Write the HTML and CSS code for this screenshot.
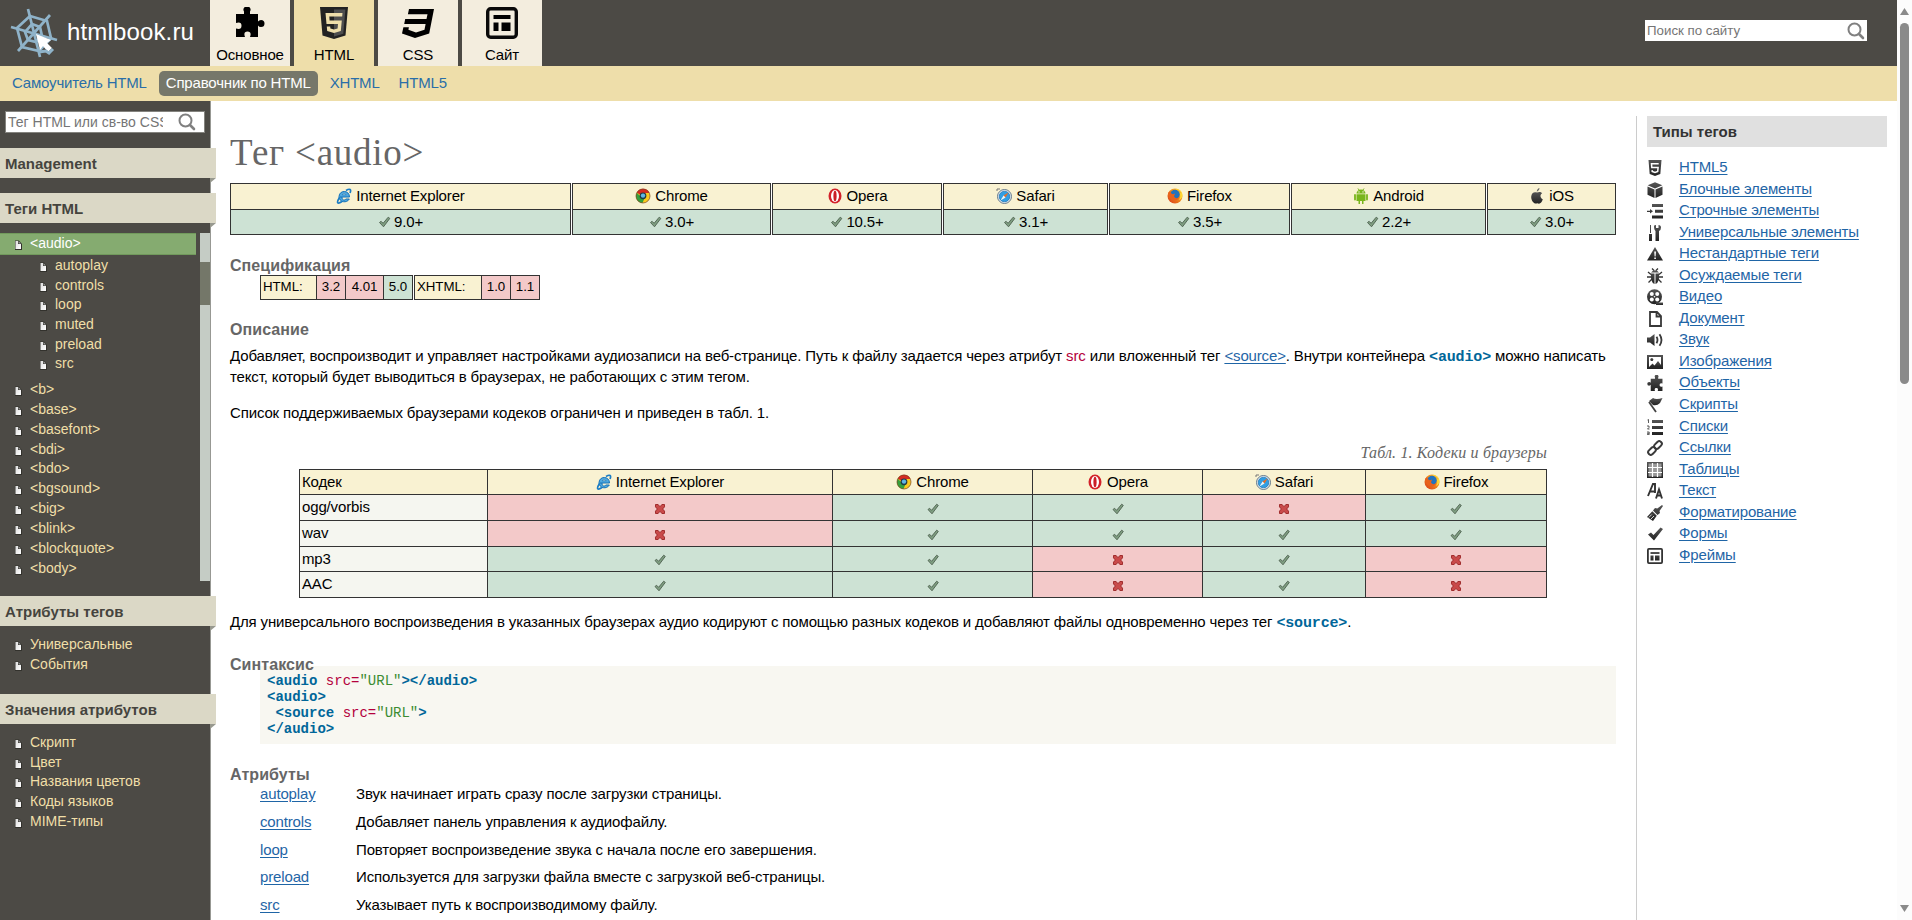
FILE: index.html
```html
<!DOCTYPE html>
<html lang="ru">
<head>
<meta charset="utf-8">
<title>Тег &lt;audio&gt; | htmlbook.ru</title>
<link rel="stylesheet" href="styles.css">
</head>
<body>
<svg class="defs" width="0" height="0" aria-hidden="true">
  <defs>
    <linearGradient id="dark" x1="0" y1="0" x2="0" y2="1"><stop offset="0" stop-color="#555"/><stop offset="1" stop-color="#222"/></linearGradient>
    <linearGradient id="ff" x1="0" y1="1" x2="1" y2="0"><stop offset="0" stop-color="#d8341a"/><stop offset=".55" stop-color="#f08a1c"/><stop offset="1" stop-color="#ffd83a"/></linearGradient>
    <linearGradient id="doc" x1="0" y1="0" x2="1" y2="1"><stop offset="0" stop-color="#ddd"/><stop offset="1" stop-color="#fff"/></linearGradient>
  </defs>
  <symbol id="i-search" viewBox="0 0 18 18"><circle cx="7.5" cy="7.5" r="6" fill="none" stroke="#808080" stroke-width="2"/><path d="M12 12l4 4" stroke="#808080" stroke-width="2.6" stroke-linecap="round"/></symbol>
  <symbol id="i-doc" viewBox="0 0 7 10"><path d="M0 .5h4L7 4v6H0z" fill="#33322d"/><path d="M.5 1H3v3h3v5H.5z" fill="url(#doc)"/><path d="M3.500 1L6 3.500H3.500z" fill="#999"/></symbol>
  <symbol id="i-ie" viewBox="0 0 16 16"><path d="M4 9h9.500c0-7-10-7.500-10.500-.5 0 6 8 7 10.300 2.500H9.800C8.500 13 5.800 12.200 6 9" fill="#4fa9df" stroke="#1672b8" stroke-width="1"/><path d="M6 6.800q2-2.800 4.300 0z" fill="#f9f2d2" stroke="#1672b8" stroke-width=".6"/><path d="M14 5c1.500-3.500 0-5-4-2.500M3.500 9.500C0 15 1.500 16.500 6 13.500" fill="none" stroke="#1a7cc4" stroke-width="1.700"/></symbol>
  <symbol id="i-chrome" viewBox="0 0 16 16"><circle cx="8" cy="8" r="7" fill="#fbc91e"/><path d="M8 8L1.700 4.800A7.100 7.100 0 0 1 14.500 5H8z" fill="#d62a20"/><path d="M1.800 4.700A7 7 0 0 0 7.500 15L10 9 6 9z" fill="#35a03c"/><circle cx="8" cy="8" r="7" fill="none" stroke="#7a4525" stroke-width=".7"/><circle cx="8" cy="7.800" r="3.400" fill="#203a45"/><circle cx="8" cy="7.600" r="2.200" fill="#5fb6e6"/></symbol>
  <symbol id="i-opera" viewBox="0 0 16 16"><ellipse cx="8" cy="8" rx="6.500" ry="7.500" fill="#d3222a"/><ellipse cx="8" cy="8" rx="4" ry="5.900" fill="#fff"/><ellipse cx="8" cy="8" rx="1.600" ry="5.300" fill="#cb1e26"/></symbol>
  <symbol id="i-safari" viewBox="0 0 16 16"><circle cx="8.500" cy="8.500" r="7" fill="#e8eef2" stroke="#64788a" stroke-width="1"/><circle cx="8.500" cy="8.500" r="5.300" fill="#319ee3" stroke="#176bb0" stroke-width=".7"/><path d="M12.500 4.500l-3 5-2-2z" fill="#e96b24"/><path d="M4.500 12.500l5-3-2-2z" fill="#f2f5f7"/><path d="M1 3V1h3" fill="none" stroke="#777" stroke-width="1"/></symbol>
  <symbol id="i-firefox" viewBox="0 0 16 16"><circle cx="8" cy="8" r="7.500" fill="url(#ff)"/><circle cx="8" cy="6.500" r="4.700" fill="#2373bd"/><path d="M1 5q2-3 3 0 1 2 4 .5l-1 3q2 3 5.500.5-2 4.500-7 3Q2 11 1 5z" fill="#e8621c"/><path d="M9 1.500q4 0 5.500 4L13 5q1 4-1 7 4-2 3.400-6Q14 1 9 .7z" fill="#ffda33"/></symbol>
  <symbol id="i-android" viewBox="0 0 16 16"><path d="M3.500 5.500a4.500 4 0 0 1 9 0z" fill="#79b51c"/><path d="M5 .5l1.400 2M11 .5L9.600 2.500" stroke="#79b51c" stroke-width="1"/><path d="M3.500 6.300h9V13h-2v3H9v-3H7v3H5.500v-3h-2z" fill="#79b51c"/><path d="M2 7v4.500M14 7v4.500" stroke="#79b51c" stroke-width="1.800" stroke-linecap="round"/><circle cx="6" cy="3.900" r=".7" fill="#fff"/><circle cx="10" cy="3.900" r=".7" fill="#fff"/></symbol>
  <symbol id="i-apple" viewBox="0 0 16 16"><path d="M10.500 0q.2 2.500-2.700 3.700Q7.700 1 10.500 0z" fill="#666"/><path d="M8 4.600c2-1.200 4-.8 5.200.6-2.500 1.500-2.200 5 .6 6.100C12.500 15 11 16.500 8.300 15.300 5 16.800 2 12.500 2.200 8.700 2.500 4.500 5.500 3.500 8 4.600z" fill="url(#dark)"/></symbol>
  <symbol id="i-ok" viewBox="0 0 12 12"><path d="M1 6.500l1.600-1.200 2 2L9.700 1.200l1.600 1.200L5 10.800z" fill="#7f9f82" stroke="#4e604f" stroke-width=".9"/></symbol>
  <symbol id="i-no" viewBox="0 0 12 12"><path d="M1.500 1.500h2.600L6 3.700l1.900-2.200h2.600v2.400L8.600 6l1.900 2.100v2.400H7.900L6 8.300l-1.900 2.200H1.500V8.100L3.400 6 1.500 3.900z" fill="#c94a4a" stroke="#982222" stroke-width=".9"/></symbol>
  <symbol id="i-puzzle" viewBox="0 0 30 30"><path d="M1 7h8V4.500a3.500 3.500 0 1 1 6-.0V7h8v7.500q1-1.500 3-1.500a3.500 3.500 0 0 1 0 7q-2 0-3-1.500V30h-8q2-5.500-2.500-5.500T10 30H1v-8.500q5.500 1.500 5.500-2.800T1 16z"/></symbol>
  <symbol id="i-html5" viewBox="0 0 28 32"><path d="M0 0h28l-2.500 28.500L14 32 2.500 28.500z" fill="#222"/><path d="M14 2.500h11.400L23.300 26.800 14 29.500z" fill="#fff" opacity=".2"/><path class="cut" d="M5.500 6h17l-.3 3.500H9.300l.3 4h12.200l-1 10.500-6.800 2-6.800-2-.4-4.500h3.400l.2 2 3.600 1 3.600-1 .4-4.500H6.500z"/></symbol>
  <symbol id="i-css3" viewBox="0 0 32 29"><path d="M7 0h25l-4.800 24.500L13 29 0 24.500l1.400-6.300h5.500l-.5 2.600L14 23.500l8.500-2.800 1.100-5.700H2.200l1-5H24.500l1-4.800H5.900z"/></symbol>
  <symbol id="i-site" viewBox="0 0 32 32"><rect x="1.700" y="1.700" width="28.600" height="28.600" rx="3" fill="none" stroke="#0a0a0a" stroke-width="3.400"/><path d="M7.500 8h17v4h-17zM7.500 15.500h5V24h-5zM15.500 15.500h9V24h-9z"/></symbol>

  <symbol id="r-html5" viewBox="0 0 16 16"><path d="M1.500 0h13l-1.200 14L8 16l-5.300-2z"/><path d="M11.700 3.800H4.500l.3 3.700h6.300l-.4 4L8 12.400l-2.800-.9-.1-1.400" fill="none" stroke="#fff" stroke-width="1.500"/></symbol>
  <symbol id="r-box" viewBox="0 0 16 16"><path d="M8 .3l7.300 3L8 6.500.7 3.300zM.5 4.500l7 3V16l-7-3.300zM15.500 4.500l-7 3V16l7-3.300z"/></symbol>
  <symbol id="r-inline" viewBox="0 0 16 16"><path d="M5 1h11v3H5zM8 6.700h8v3H8zM5 12.500h11v3H5zM0 7.700h3V6l3 2.300-3 2.300V9H0z"/></symbol>
  <symbol id="r-tools" viewBox="0 0 16 16"><path d="M3 0h1v8H3zM2 9h3v7H2zM7 1q0-1 2-1v3h2.500V0q2.500 0 2.500 2.500T12 6v10H8.500V6Q7 5 7 1z"/></symbol>
  <symbol id="r-warn" viewBox="0 0 16 16"><path d="M8 1l8 13.500H0z"/><path d="M7.200 5.500h1.800l-.4 5H7.600zM7.300 11.500h1.600v1.500H7.300z" fill="#fff"/></symbol>
  <symbol id="r-bug" viewBox="0 0 16 16"><path d="M4 4.500q4-4.500 8 0zM4 5.500h3.500V16Q3 14 4 5.500zM8.500 5.500H12q1 8.500-3.500 10.500z"/><path d="M5 .5l2 2M11 .5l-2 2M1 4l3 2.500M15 4l-3 2.500M0 9h4M16 9h-4M1.500 14.500L5 11M14.500 14.500L11 11" stroke="#333" stroke-width="1.300"/></symbol>
  <symbol id="r-reel" viewBox="0 0 16 16"><circle cx="7.500" cy="7.800" r="7.500"/><path d="M9 13.500h7V16H9z"/><g fill="#fff"><circle cx="4.800" cy="5" r="2"/><circle cx="10.200" cy="5" r="2"/><circle cx="4.800" cy="10.600" r="2"/><circle cx="10.200" cy="10.600" r="2"/><circle cx="7.500" cy="7.800" r=".8"/></g></symbol>
  <symbol id="r-page" viewBox="0 0 16 16"><path d="M3 1h7l4 4v10H3zM9.500 1v4.500H14" fill="none" stroke="#383838" stroke-width="1.800"/></symbol>
  <symbol id="r-sound" viewBox="0 0 16 16"><path d="M0 5.500h3L7.500 2v12L3 10.500H0z"/><path d="M9.500 4.800q2 3.200 0 6.400M12.500 2.200q4 5.800 0 11.600" fill="none" stroke="#3a3a3a" stroke-width="1.800"/></symbol>
  <symbol id="r-image" viewBox="0 0 16 16"><path d="M0 1h16v14H0z"/><path d="M2 3h12v10H2z" fill="#fff"/><path d="M2 13l3.500-3.500 2 2L11 7l3 4v2z"/><circle cx="4.800" cy="5.500" r="1.500"/></symbol>
  <symbol id="r-flag" viewBox="0 0 16 16"><path d="M2 4l4-3q3 2 9.500 0L13 6q-3 3-7 2z"/><path d="M2 5l7 10" stroke="#444" stroke-width="1.800"/></symbol>
  <symbol id="r-list" viewBox="0 0 16 16"><path d="M5 1h11v3H5zM5 7h11v3H5zM5 13h11v3H5z"/><path d="M.5 1l1-.5V4M0 7h2v1.500L.5 10h2M0 13h2.200v2.600H0M0 14.300h2" stroke="#333" fill="none" stroke-width=".8"/></symbol>
  <symbol id="r-link" viewBox="0 0 16 16"><g fill="none" stroke="#3a3a3a" stroke-width="2"><rect x="-4.300" y="-2.600" width="8.600" height="5.200" rx="2.600" transform="translate(11 5) rotate(-45)"/><rect x="-4.300" y="-2.600" width="8.600" height="5.200" rx="2.600" transform="translate(5 11) rotate(-45)"/></g></symbol>
  <symbol id="r-table" viewBox="0 0 16 16"><path d="M0 0h16v16H0z"/><path d="M1.500 1.500h13v13h-13z" fill="#999"/><path d="M5.500 1v14M10.500 1v14M1 5.500h14M1 10.500h14" stroke="#fff" stroke-width="1.200"/></symbol>
  <symbol id="r-text" viewBox="0 0 16 16"><path d="M1 13L6 1h2v9M3 8.500h5M9 15.500l3-9 3 9M10 12.500h4" fill="none" stroke="#333" stroke-width="1.900"/></symbol>
  <symbol id="r-brush" viewBox="0 0 16 16"><path d="M15 0l1 1-3.500 5 .5 2-2.500 2L6 5.500 8 3l2.300.5zM5.300 6.300l4.500 4.500L6 16 0 12z"/><path d="M1.800 12.500l3-3M4 14l3-3" stroke="#fff" stroke-width=".8"/></symbol>
  <symbol id="r-check" viewBox="0 0 16 16"><path d="M1 8.500l3-2L6.500 9 13.500 1.500 16 3 7 14.500z"/></symbol>
  <symbol id="r-frame" viewBox="0 0 16 16"><rect x=".9" y=".9" width="14.200" height="14.200" rx="1" fill="none" stroke="#333" stroke-width="1.800"/><path d="M3.500 4h9v2h-9zM3.500 7.500h3v5h-3zM8 7.500h4.500v5H8z"/></symbol>
</svg>

<div class="viewport">
  <div class="page">
    <header class="header">
      <a class="logo">
        <svg width="48" height="52" viewBox="0 0 48 52">
          <g fill="none" stroke="#8fb3c9" stroke-width="2.700">
            <path d="M18 1l12 48M40 7L8 43M1 19l46 13"/>
            <path d="M20 8L37 13 41 30 29 43 12 39 7 20z"/>
            <path d="M22 16l8 3 2 9-6 6-8-2-3-8z"/>
          </g>
          <path d="M26 26l15 6-4 3 5 5-4 4-5-6-3 4z" fill="#fff"/>
          <path d="M29 44l7-1 3 2 4-4" fill="none" stroke="#8fb3c9" stroke-width="3"/>
        </svg>
        <span>htmlbook.ru</span>
      </a>
      <nav class="tabs">
        <a class="tab"><svg width="30" height="30"><use href="#i-puzzle"/></svg><span>Основное</span></a>
        <a class="tab current"><svg width="30" height="32"><use href="#i-html5"/></svg><span>HTML</span></a>
        <a class="tab css"><svg width="32" height="29"><use href="#i-css3"/></svg><span>CSS</span></a>
        <a class="tab"><svg width="32" height="32"><use href="#i-site"/></svg><span>Сайт</span></a>
      </nav>
      <div class="search site-search"><span>Поиск по сайту</span><svg width="18" height="18"><use href="#i-search"/></svg></div>
    </header>
    <nav class="subnav">
      <a>Самоучитель HTML</a><a class="current">Справочник по HTML</a><a>XHTML</a><a>HTML5</a>
    </nav>
    <div class="columns">
      <aside class="sidebar">
        <div class="search tag-search"><span>Тег HTML или св-во CSS</span><svg width="18" height="18"><use href="#i-search"/></svg></div>
        <h3>Management</h3>
        <h3 class="tags">Теги HTML</h3>
        <div class="scroller">
          <ul>
            <li class="active"><svg><use href="#i-doc"/></svg>&lt;audio&gt;</li>
            <li class="nest">
              <ul>
                <li><svg><use href="#i-doc"/></svg>autoplay</li>
                <li><svg><use href="#i-doc"/></svg>controls</li>
                <li><svg><use href="#i-doc"/></svg>loop</li>
                <li><svg><use href="#i-doc"/></svg>muted</li>
                <li><svg><use href="#i-doc"/></svg>preload</li>
                <li><svg><use href="#i-doc"/></svg>src</li>
              </ul>
            </li>
            <li><svg><use href="#i-doc"/></svg>&lt;b&gt;</li>
            <li><svg><use href="#i-doc"/></svg>&lt;base&gt;</li>
            <li><svg><use href="#i-doc"/></svg>&lt;basefont&gt;</li>
            <li><svg><use href="#i-doc"/></svg>&lt;bdi&gt;</li>
            <li><svg><use href="#i-doc"/></svg>&lt;bdo&gt;</li>
            <li><svg><use href="#i-doc"/></svg>&lt;bgsound&gt;</li>
            <li><svg><use href="#i-doc"/></svg>&lt;big&gt;</li>
            <li><svg><use href="#i-doc"/></svg>&lt;blink&gt;</li>
            <li><svg><use href="#i-doc"/></svg>&lt;blockquote&gt;</li>
            <li><svg><use href="#i-doc"/></svg>&lt;body&gt;</li>
          </ul>
          <div class="track"><div class="thumb"></div></div>
        </div>
        <h3 class="attrs">Атрибуты тегов</h3>
        <ul class="plain">
          <li><svg><use href="#i-doc"/></svg>Универсальные</li>
          <li><svg><use href="#i-doc"/></svg>События</li>
        </ul>
        <h3 class="values">Значения атрибутов</h3>
        <ul class="plain">
          <li><svg><use href="#i-doc"/></svg>Скрипт</li>
          <li><svg><use href="#i-doc"/></svg>Цвет</li>
          <li><svg><use href="#i-doc"/></svg>Названия цветов</li>
          <li><svg><use href="#i-doc"/></svg>Коды языков</li>
          <li><svg><use href="#i-doc"/></svg>MIME-типы</li>
        </ul>
      </aside>

      <main class="content">
        <h1>Тег &lt;audio&gt;</h1>
        <div class="browsers">
          <div><span><svg><use href="#i-ie"/></svg>Internet Explorer</span><b><svg><use href="#i-ok"/></svg>9.0+</b></div>
          <div><span><svg><use href="#i-chrome"/></svg>Chrome</span><b><svg><use href="#i-ok"/></svg>3.0+</b></div>
          <div><span><svg><use href="#i-opera"/></svg>Opera</span><b><svg><use href="#i-ok"/></svg>10.5+</b></div>
          <div><span><svg><use href="#i-safari"/></svg>Safari</span><b><svg><use href="#i-ok"/></svg>3.1+</b></div>
          <div><span><svg><use href="#i-firefox"/></svg>Firefox</span><b><svg><use href="#i-ok"/></svg>3.5+</b></div>
          <div><span><svg><use href="#i-android"/></svg>Android</span><b><svg><use href="#i-ok"/></svg>2.2+</b></div>
          <div><span><svg><use href="#i-apple"/></svg>iOS</span><b><svg><use href="#i-ok"/></svg>3.0+</b></div>
        </div>
        <h2>Спецификация</h2>
        <div class="spec">
          <div class="spec-html"><span>HTML:</span><i>3.2</i><i>4.01</i><i class="yes">5.0</i></div>
          <div class="spec-xhtml"><span>XHTML:</span><i>1.0</i><i>1.1</i></div>
        </div>
        <h2 class="h-desc">Описание</h2>
        <p>Добавляет, воспроизводит и управляет настройками аудиозаписи на веб-странице. Путь к файлу задается через атрибут <span class="attr">src</span> или вложенный тег <a>&lt;source&gt;</a>. Внутри контейнера <code>&lt;audio&gt;</code> можно написать текст, который будет выводиться в браузерах, не работающих с этим тегом.</p>
        <p class="second">Список поддерживаемых браузерами кодеков ограничен и приведен в табл. 1.</p>
        <div class="caption">Табл. 1. Кодеки и браузеры</div>
        <div class="codecs">
          <span class="left">Кодек</span><span><svg><use href="#i-ie"/></svg>Internet Explorer</span><span><svg><use href="#i-chrome"/></svg>Chrome</span><span><svg><use href="#i-opera"/></svg>Opera</span><span><svg><use href="#i-safari"/></svg>Safari</span><span><svg><use href="#i-firefox"/></svg>Firefox</span>
          <em>ogg/vorbis</em><i><svg><use href="#i-no"/></svg></i><b><svg><use href="#i-ok"/></svg></b><b><svg><use href="#i-ok"/></svg></b><i><svg><use href="#i-no"/></svg></i><b><svg><use href="#i-ok"/></svg></b>
          <em>wav</em><i><svg><use href="#i-no"/></svg></i><b><svg><use href="#i-ok"/></svg></b><b><svg><use href="#i-ok"/></svg></b><b><svg><use href="#i-ok"/></svg></b><b><svg><use href="#i-ok"/></svg></b>
          <em>mp3</em><b><svg><use href="#i-ok"/></svg></b><b><svg><use href="#i-ok"/></svg></b><i><svg><use href="#i-no"/></svg></i><b><svg><use href="#i-ok"/></svg></b><i><svg><use href="#i-no"/></svg></i>
          <em>AAC</em><b><svg><use href="#i-ok"/></svg></b><b><svg><use href="#i-ok"/></svg></b><i><svg><use href="#i-no"/></svg></i><b><svg><use href="#i-ok"/></svg></b><i><svg><use href="#i-no"/></svg></i>
        </div>
        <p class="third">Для универсального воспроизведения в указанных браузерах аудио кодируют с помощью разных кодеков и добавляют файлы одновременно через тег <code>&lt;source&gt;</code>.</p>
        <h2 class="h-syntax">Синтаксис</h2>
<pre><b>&lt;audio</b> <span class="attr">src=</span><span class="val">"URL"</span><b>&gt;&lt;/audio&gt;</b>
<b>&lt;audio&gt;</b>
 <b>&lt;source</b> <span class="attr">src=</span><span class="val">"URL"</span><b>&gt;</b>
<b>&lt;/audio&gt;</b></pre>
        <h2>Атрибуты</h2>
        <dl>
          <dt><a>autoplay</a></dt><dd>Звук начинает играть сразу после загрузки страницы.</dd>
          <dt><a>controls</a></dt><dd>Добавляет панель управления к аудиофайлу.</dd>
          <dt><a>loop</a></dt><dd>Повторяет воспроизведение звука с начала после его завершения.</dd>
          <dt><a>preload</a></dt><dd>Используется для загрузки файла вместе с загрузкой веб-страницы.</dd>
          <dt><a>src</a></dt><dd>Указывает путь к воспроизводимому файлу.</dd>
        </dl>
      </main>

      <aside class="types">
        <h4>Типы тегов</h4>
        <ul>
          <li><svg><use href="#r-html5"/></svg><a>HTML5</a></li>
          <li><svg><use href="#r-box"/></svg><a>Блочные элементы</a></li>
          <li><svg><use href="#r-inline"/></svg><a>Строчные элементы</a></li>
          <li><svg><use href="#r-tools"/></svg><a>Универсальные элементы</a></li>
          <li><svg><use href="#r-warn"/></svg><a>Нестандартные теги</a></li>
          <li><svg><use href="#r-bug"/></svg><a>Осуждаемые теги</a></li>
          <li><svg><use href="#r-reel"/></svg><a>Видео</a></li>
          <li><svg><use href="#r-page"/></svg><a>Документ</a></li>
          <li><svg><use href="#r-sound"/></svg><a>Звук</a></li>
          <li><svg><use href="#r-image"/></svg><a>Изображения</a></li>
          <li><svg class="flip"><use href="#i-puzzle"/></svg><a>Объекты</a></li>
          <li><svg><use href="#r-flag"/></svg><a>Скрипты</a></li>
          <li><svg><use href="#r-list"/></svg><a>Списки</a></li>
          <li><svg><use href="#r-link"/></svg><a>Ссылки</a></li>
          <li><svg><use href="#r-table"/></svg><a>Таблицы</a></li>
          <li><svg><use href="#r-text"/></svg><a>Текст</a></li>
          <li><svg><use href="#r-brush"/></svg><a>Форматирование</a></li>
          <li><svg><use href="#r-check"/></svg><a>Формы</a></li>
          <li><svg><use href="#r-frame"/></svg><a>Фреймы</a></li>
        </ul>
      </aside>
    </div>
  </div>
  <div class="scrollbar">
    <svg width="15" height="23" viewBox="0 0 15 23"><path d="M7.500 8l4.500 7H3z" fill="#8a8a8a"/></svg>
    <div class="bar"></div>
    <svg class="down" width="15" height="23" viewBox="0 0 15 23"><path d="M7.500 15L3 8h9z" fill="#8a8a8a"/></svg>
  </div>
</div>
</body>
</html>
```
FILE: styles.css
```css
* { box-sizing: border-box; }
body { margin: 0; font: 15px/21px "Liberation Sans", Arial, sans-serif; color: #000; background: #fff; overflow: hidden; }
ul, dl, dd, h1, h2, h3, h4, p, pre { margin: 0; padding: 0; }
ul { list-style: none; }
.defs { position: absolute; }
.cut { fill: #eedeaa; }
.viewport { display: flex; height: 920px; }
.page { flex: 1; display: flex; flex-direction: column; min-width: 0; }

.header { display: flex; height: 66px; background: #4c4a45; flex: none; }
.logo { display: flex; width: 210px; padding: 8px 0 0 10px; color: #fff; font-size: 24px; line-height: 48px; letter-spacing: .15px; }
.logo span { margin-left: 9px; }
.tabs { display: flex; gap: 4px; }
.tab { width: 80px; background: #f3edde; display: flex; flex-direction: column; align-items: center; padding-top: 7px; height: 66px; color: #000; letter-spacing: -.14px; }
.tab.current { background: #eedeaa; }
.tab.css { padding-top: 9px; }
.tab svg { flex: none; }
.tab span { margin-top: auto; line-height: 22px; }
.search { display: flex; align-items: center; background: #fff; color: #757575; font-size: 14px; }
.search span { white-space: nowrap; overflow: hidden; flex: 1; }
.site-search { width: 222px; height: 21px; margin: 20px 30px 0 auto; padding: 0 2px 0 2px; font-size: 13.300px; }

.subnav { display: flex; height: 35px; flex: none; background: #eedeaa; padding: 5px 0 0 5px; gap: 5px; letter-spacing: -.18px; }
.subnav a { height: 25px; line-height: 23px; padding: 0 7px; border-radius: 5px; color: #2a6ea8; }
.subnav a.current { background: #76776a; color: #fff; }

.columns { display: flex; flex: 1; min-height: 0; }
.sidebar { width: 211px; background: #4c4a45; border-right: 1px solid #979893; padding-top: 10px; font-size: 14px; color: #f0dfa8; flex: none; }
.tag-search { width: 200px; height: 22px; margin-left: 5px; border: 1px solid #84837e; padding: 0 8px 0 2px; }
.tag-search span { flex: none; width: 155px; }
.tag-search svg { margin-left: auto; }
.sidebar h3 { position: relative; width: 216px; height: 30px; margin-top: 15px; background: #dbd8c6; color: #45443e; font-size: 15px; line-height: 31px; padding-left: 5px; }
.sidebar h3::after { content: ""; position: absolute; left: 210px; top: 30px; border-top: 5px solid #98998f; border-right: 6px solid transparent; }
.sidebar h3.attrs { margin-top: 15px; }
.sidebar h3.values { margin-top: 20px; }
.scroller { display: flex; justify-content: space-between; height: 348px; margin-top: 10px; }
.scroller > ul { width: 196px; }
.track { width: 10px; background: #c5ccc5; padding-top: 29px; }
.thumb { height: 43px; background: #747769; }
.sidebar li { display: flex; height: 19.850px; line-height: 20px; padding-left: 15px; }
.sidebar li svg { width: 7px; height: 10px; margin: 7px 8px 0 0; flex: none; }
.sidebar li.active { height: 22px; line-height: 18px; background: #85ab70; color: #fff; border-bottom: 1px solid #719a5c; border-top: 1px solid #719a5c; }
.sidebar li.active svg { margin-top: 6px; }
.sidebar li.nest { height: 124px; padding: 0 0 0 25px; }
.nest li { height: 19.700px; }
.plain { padding-top: 8px; }

.content { flex: 1; display: flex; flex-direction: column; padding: 31px 20px 0 19px; min-width: 0; letter-spacing: -.145px; }
h1 { font: 400 37px/42px "Liberation Serif", Georgia, serif; color: #666; letter-spacing: .75px; height: 40px; }
h2 { position: relative; font-size: 16px; line-height: 20px; color: #666; margin-top: 21px; letter-spacing: .07px; }
h2.h-desc { margin-top: 20px; }
h2.h-syntax { margin-top: 23px; }
p { margin-top: 5px; }
p.second { margin-top: 15px; }
p.third { margin-top: 13px; }
a { color: #1f65a6; }
p a, dl a, .types a { text-decoration: underline; text-underline-offset: 2px; }
code { font: bold 15px/1 "Liberation Mono", monospace; color: #069; }
.attr { color: #b4003c; }
.val { color: #3c8c32; }
.browsers { display: grid; grid-template-columns: 341px 199px 170px 165px 181px 195px 1fr; gap: 1px; margin-top: 11px; }
.browsers > div { display: grid; grid-template-rows: 25px 24px; gap: 1px; padding: 1px; background: #333; }
.browsers span, .browsers b, .codecs > * { display: flex; justify-content: center; align-items: center; font-weight: 400; font-style: normal; padding-bottom: 2px; }
.browsers span, .codecs span { background: #f9f2d2; }
.browsers b, .codecs b { background: #cde2d4; }
.browsers span svg, .codecs span svg { width: 16px; height: 16px; margin: 1px 4px 0 0; }
.browsers b svg { width: 13px; height: 12px; margin: 1px 3px 0 0; }
.codecs i { background: #f3c9c9; }
.codecs em { background: #f5f6f0; }
.codecs em, .codecs .left { justify-content: flex-start; padding-left: 2px; }
.codecs b svg, .codecs i svg { width: 12px; height: 12px; margin-top: 4px; }
.spec { display: flex; gap: 1px; margin: -1px 0 0 30px; font-size: 13.300px; letter-spacing: -.05px; }
.spec > div { display: grid; gap: 1px; padding: 1px; background: #333; height: 25px; }
.spec-html { grid-template-columns: 55px 28px 37px 28px; }
.spec-xhtml { grid-template-columns: 66px 28px 28px; }
.spec span { background: #f9f2d2; padding-left: 2px; }
.spec i { background: #f3c9c9; text-align: center; font-style: normal; }
.spec .yes { background: #cde2d4; }
.caption { font: italic 16px/20px "Liberation Serif", Georgia, serif; color: #666; margin: 20px 69px 0 0; text-align: right; letter-spacing: .15px; }
.codecs { display: grid; grid-template-columns: 187px 344px 199px 169px 162px 1fr; grid-template-rows: 24px 25px 25px 24px 25px; gap: 1px; padding: 1px; background: #333; margin: 6px 69px 0 69px; }
pre { margin: -9px 0 0 30px; height: 78px; background: #f8f7f1; padding: 7px; font: 14px/16px "Liberation Mono", monospace; letter-spacing: 0; }
pre b { color: #069; }
dl { display: grid; grid-template-columns: 96px 1fr; grid-auto-rows: 27.750px; margin: -1px 0 0 30px; line-height: 20px; }

.types { width: 261px; margin-top: 15px; border-left: 1px solid #ccc; padding: 0 10px; flex: none; }
.types h4 { height: 31px; background: #e0e0e0; padding-left: 6px; font-size: 15px; line-height: 31px; color: #333; }
.types ul { margin-top: 9px; letter-spacing: -.14px; }
.types li { display: flex; height: 21.560px; line-height: 21px; }
.types li svg { width: 16px; height: 16px; margin: 4px 16px 0 0; fill: url(#dark); flex: none; }
.types .flip { transform: scaleX(-1); }
.scrollbar { width: 15px; background: #fcfcfc; display: flex; flex-direction: column; flex: none; }
.bar { width: 9px; height: 361px; margin-left: 3px; border-radius: 5px; background: #8a8a8a; }
.down { margin-top: auto; }
```
